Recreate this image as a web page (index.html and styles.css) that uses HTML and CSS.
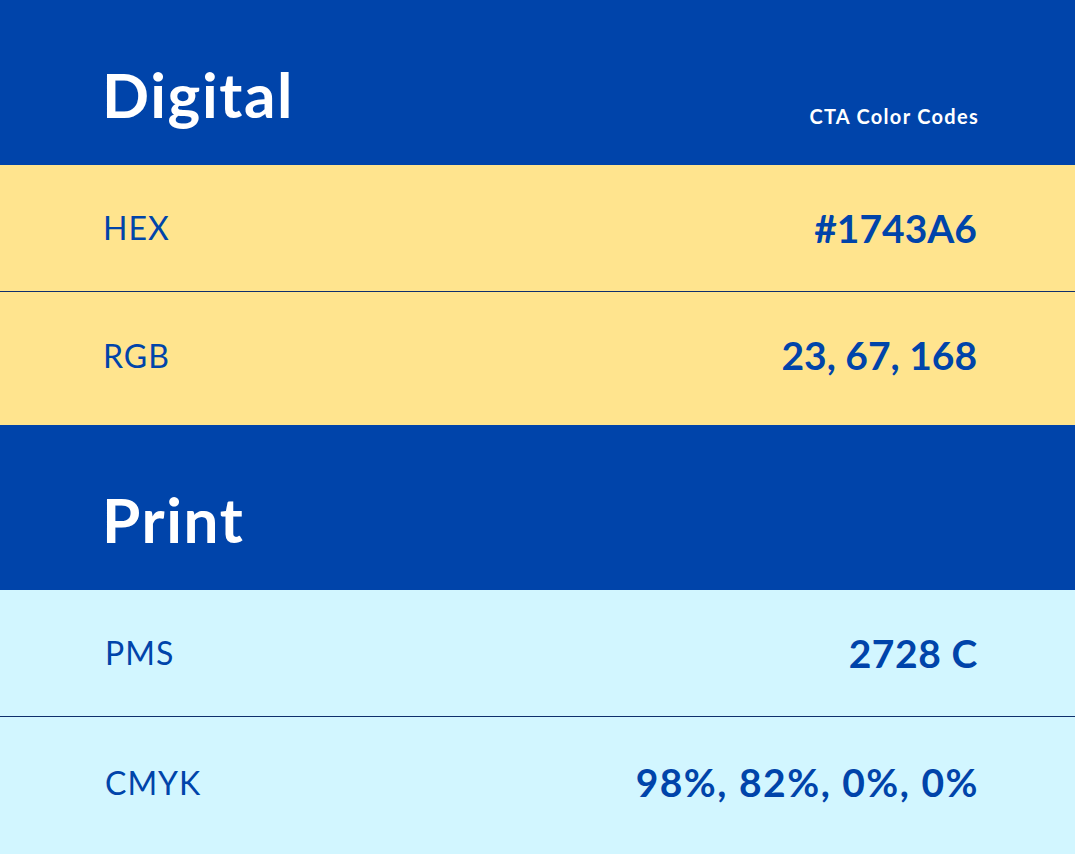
FILE: index.html
```html
<!DOCTYPE html>
<html lang="en">
<head>
<meta charset="utf-8">
<title>CTA Color Codes</title>
<link rel="stylesheet" href="styles.css">
</head>
<body>
<main class="sheet">
  <header class="band">
    <h1 class="band-title">Digital</h1>
    <span class="band-note">CTA Color Codes</span>
  </header>
  <section class="group group-yellow">
    <div class="row row-first">
      <span class="label">HEX</span>
      <span class="value">#1743A6</span>
    </div>
    <div class="row row-last">
      <span class="label">RGB</span>
      <span class="value">23, 67, 168</span>
    </div>
  </section>
  <header class="band">
    <h1 class="band-title">Print</h1>
  </header>
  <section class="group group-cyan">
    <div class="row row-first">
      <span class="label label-shift">PMS</span>
      <span class="value value-mid">2728 C</span>
    </div>
    <div class="row row-tail">
      <span class="label label-shift">CMYK</span>
      <span class="value value-wide">98%, 82%, 0%, 0%</span>
    </div>
  </section>
</main>
</body>
</html>
```

FILE: styles.css
```css
* { box-sizing: border-box; }
html, body { margin: 0; padding: 0; }
body {
  background: #0044aa;
  font-family: Lato, "Open Sans", sans-serif;
  color: #0044aa;
}
.sheet { width: 1075px; }
.band {
  height: 165px;
  background: #0044aa;
  color: #fff;
  display: flex;
  justify-content: space-between;
  align-items: flex-end;
  padding: 0 96px 40px 102px;
}
.band-title {
  margin: 0;
  font-size: 62px;
  line-height: 1;
  font-weight: 700;
  letter-spacing: 1.6px;
}
.band-note {
  font-size: 20px;
  line-height: 1;
  font-weight: 700;
  letter-spacing: 1.3px;
  margin-bottom: -1px;
}
.group-yellow { background: #ffe48e; }
.group-cyan { background: #d2f6ff; }
.row {
  display: flex;
  justify-content: space-between;
  align-items: center;
  padding: 0 98px 0 103px;
}
.row-first {
  height: 127px;
  border-bottom: 1px solid #0f2f6c;
}
.row-last { height: 133px; padding-bottom: 6px; }
.row-tail { height: 137px; padding-bottom: 6px; }
.label {
  font-size: 32px;
  font-weight: 400;
  line-height: 1;
  letter-spacing: 1px;
}
.label-shift { margin-left: 2px; }
.value {
  font-size: 39px;
  font-weight: 700;
  line-height: 1;
}
.value-mid { letter-spacing: 0.6px; margin-right: -1px; }
.value-wide { letter-spacing: 1.5px; margin-right: -2px; }
```
